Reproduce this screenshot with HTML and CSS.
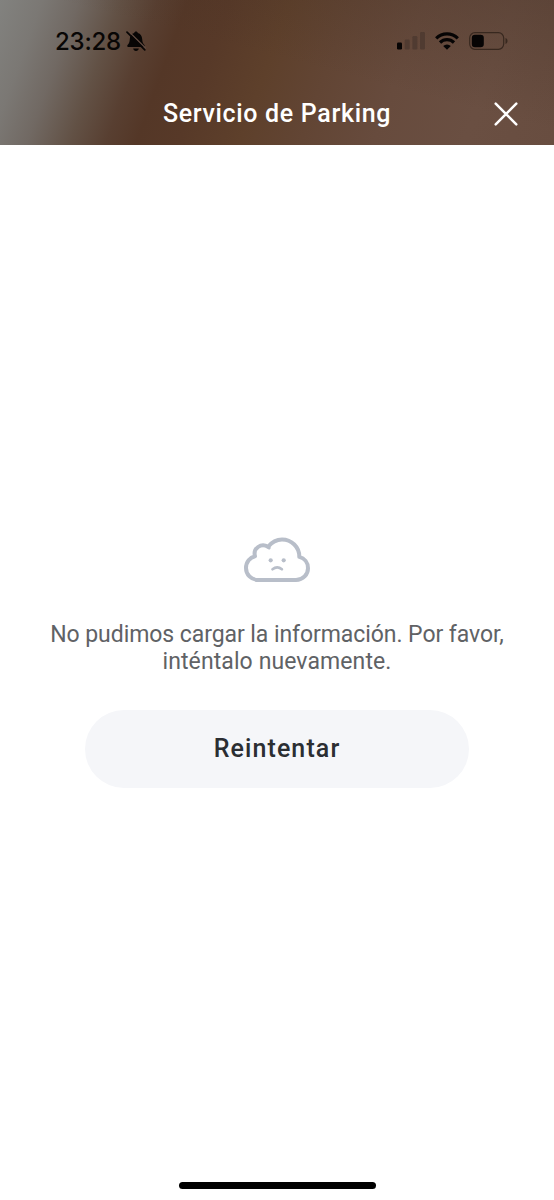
FILE: index.html
```html
<!DOCTYPE html>
<html lang="es">
<head>
<meta charset="utf-8">
<title>Servicio de Parking</title>
<link rel="stylesheet" href="styles.css">
</head>
<body>
<div class="screen">
  <header class="header">
    <div class="status">
      <div class="clock">
        <span class="time">23:28</span>
        <svg class="bell" width="20" height="21" viewBox="0 0 20 21">
          <path d="M10 .6c-.9 0-1.600.6-1.800 1.300C5.400 2.700 4 5 3.800 8c-.2 3-.6 4.400-2.200 6-.8.9-.4 2 .7 2h15.400c1.100 0 1.500-1.100.7-2-1.600-1.600-2-3-2.200-6-.2-3-1.600-5.300-4.400-6.100C11.600 1.200 10.900.6 10 .6zM7.200 17.600h5.600c-.2 1.500-1.300 2.400-2.800 2.400s-2.600-.9-2.800-2.400z" fill="#080605"/>
          <path d="M2.500 .2 20 17.500" stroke="#604b40" stroke-width="1.300"/>
          <path d="M1 1.200 18.800 18.800" stroke="#080605" stroke-width="1.700" stroke-linecap="round"/>
        </svg>
      </div>
      <div class="indicators">
        <svg width="28" height="18" viewBox="0 0 28 18">
          <rect x="0" y="10.500" width="5" height="7" rx="1.200" fill="#060404"/>
          <g fill="#503b31"><rect x="7.700" y="7.500" width="5" height="10" rx="1.200"/><rect x="15.400" y="4" width="5" height="13.500" rx="1.200"/><rect x="23" y="0" width="5" height="17.500" rx="1.200"/></g>
        </svg>
        <svg class="wifi" width="24" height="18" viewBox="0 0 24 18" fill="none" stroke="#060404" stroke-width="3.200">
          <path d="M1.200 6.300a15.300 15.300 0 0 1 21.600 0"/>
          <path d="M5 10.500a9.900 9.900 0 0 1 14 0"/>
          <path d="M12 17.800 8.200 14a5.400 5.400 0 0 1 7.600 0z" fill="#060404" stroke="none"/>
        </svg>
        <svg class="battery" width="39" height="18" viewBox="0 0 39 18">
          <rect x=".7" y=".7" width="34" height="16.600" rx="5.200" fill="none" stroke="#38281f" stroke-width="1.200"/>
          <rect x="2.800" y="2.800" width="12" height="12.400" rx="3.200" fill="#060404"/>
          <path d="M36.500 6c1.400.4 2 1.600 2 3s-.6 2.600-2 3z" fill="#38281f"/>
        </svg>
      </div>
    </div>
    <div class="titlebar">
      <h1 class="title">Servicio de Parking</h1>
      <svg class="close" width="24" height="24" viewBox="0 0 24 24"><path d="m1.700 1.700 20.600 20.600m0-20.600L1.700 22.300" stroke="#fff" stroke-width="2.500" stroke-linecap="round"/></svg>
    </div>
  </header>
  <main class="content">
    <svg class="cloud" width="68" height="46" viewBox="0 0 68 46">
      <path d="M15.500 43C8 43 3 37.500 3 31c0-6.200 4-10.700 9-11.800C9.800 11.500 18 5.500 25 9.800 29.500 4.300 34 2.500 39 2.500c9.500 0 17.500 7.500 17.300 17.400 5.200 1.300 8.700 5.900 8.700 11.300C65 37.500 60 43 53 43z" fill="none" stroke="#b8bec9" stroke-width="4" stroke-linejoin="round"/>
      <path d="M24.800 9.700l1.300 1.200" stroke="#b8bec9" stroke-width="3.200" stroke-linecap="round"/>
      <circle cx="27.700" cy="23.300" r="2.100" fill="#b8bec9"/><circle cx="40.700" cy="23.300" r="2.100" fill="#b8bec9"/>
      <path d="M29.500 32.200c2.800-2.200 6.600-2.200 9.400 0" fill="none" stroke="#b8bec9" stroke-width="2.700" stroke-linecap="round"/>
    </svg>
    <p class="message"><span class="line1">No pudimos cargar la información. Por favor,</span><br><span class="line2">inténtalo nuevamente.</span></p>
    <button class="retry">Reintentar</button>
  </main>
  <div class="home"></div>
</div>
</body>
</html>
```
FILE: styles.css
```css
body { margin: 0; background: #fff; }
.screen { width: 554px; height: 1200px; display: flex; flex-direction: column; align-items: center; font-family: Roboto, sans-serif; }
.header {
  width: 554px; height: 145px; flex: none;
  background:
    linear-gradient(to bottom left, rgba(70, 50, 38, .35), rgba(70, 50, 38, 0) 45%),
    linear-gradient(110deg, #82827f 0, #7b7874 7%, #716963 13%, #625145 20%, #583f31 26%, #543727 31%, #573928 38%, #5e402b 48%, #624534 58%, #674b3d 70%, #6a4f42 85%, #684d40 100%);
}
.status { height: 82px; display: flex; justify-content: space-between; box-sizing: border-box; padding: 0 46px 0 55px; }
.clock { display: flex; align-items: flex-start; gap: 5px; }
.time { padding-top: 27px; font: 500 24px/30px Inter, sans-serif; letter-spacing: -.2px; color: #080605; }
.bell { margin-top: 31px; }
.indicators { display: flex; align-items: flex-start; padding-top: 32px; }
.wifi { margin-left: 10px; }
.battery { margin-left: 10px; }
.titlebar { height: 63px; display: grid; grid-template-columns: 60px 1fr 60px; align-items: center; }
.title { grid-column: 2; margin: 0; text-align: center; font: 500 25px/30px Roboto, sans-serif; letter-spacing: .67px; color: #fff; }
.content { flex: 1; display: flex; flex-direction: column; align-items: center; padding-top: 392px; }
.message { margin: 38px 0 0; text-align: center; font-size: 23px; line-height: 27px; color: #606265; white-space: nowrap; }
.line1 { letter-spacing: -.07px; }
.line2 { letter-spacing: .1px; }
.retry { width: 384px; height: 78px; margin: 35px 0 0; padding: 0; border: 0; border-radius: 39px; background: #f5f6f9; color: #2b2e32; font: 500 25px/30px Roboto, sans-serif; letter-spacing: 1.1px; }
.home { width: 197px; height: 7px; flex: none; border-radius: 4px; background: #000; margin-bottom: 11px; }
```
